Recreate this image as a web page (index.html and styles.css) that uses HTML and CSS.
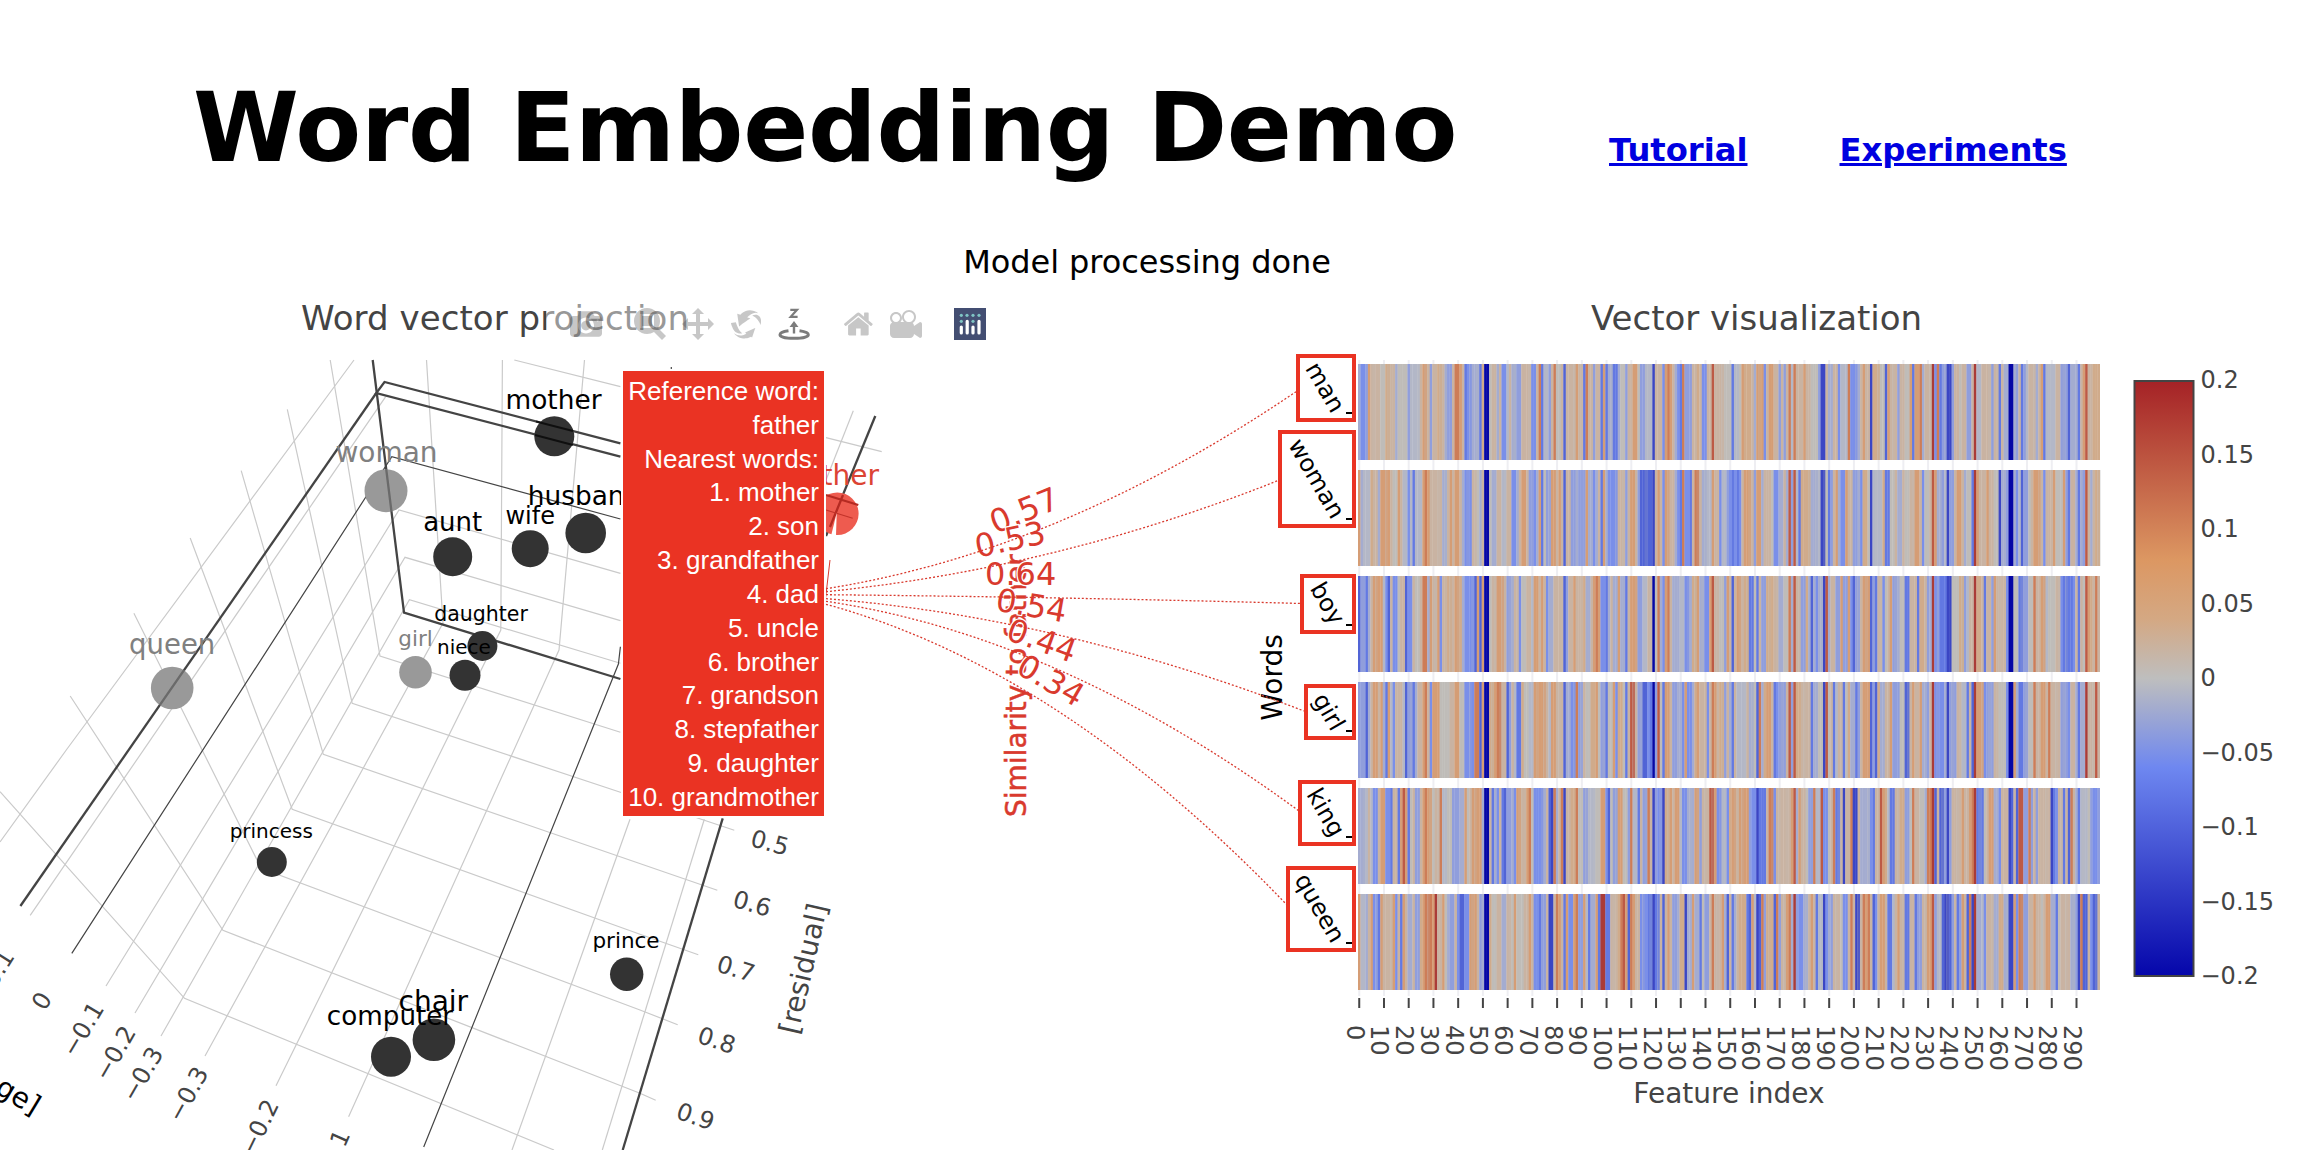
FILE: index.html
```html
<!DOCTYPE html>
<html lang="en">
<head>
<meta charset="utf-8">
<title>Word Embedding Demo</title>
<link rel="stylesheet" href="styles.css">
</head>
<body>
<header class="top">
  <h1 class="title">Word Embedding Demo</h1>
  <nav class="links"><a href="#tutorial">Tutorial</a><a href="#experiments">Experiments</a></nav>
</header>
<p class="status">Model processing done</p>
<main class="plots">
  <section class="scatter">
    <svg width="826" height="866" viewBox="0 284 826 866">
      <text class="plot-title" x="301" y="330" textLength="388">Word vector projection</text>
      <g class="grid">
        <path d="M354 360L67 749L0 842"/>
        <path d="M385.7 396.7L30.2 915.3"/>
        <path d="M620.4 573.3L399 510L106 986"/>
        <path d="M620.4 620.7L405 557.3L135 1013"/>
        <path d="M620.4 663.3L409.4 599.7L161 1036"/>
        <path d="M426.5 360L443 623L205 1056"/>
        <path d="M502.4 360L500.8 630L276 1085.7"/>
        <path d="M584.5 360L559 650L348.6 1116.7"/>
        <path d="M330.2 360L380 656L620.4 732.3"/>
        <path d="M287.3 409.3L352.2 703.3L620.4 792.3L734.3 830.3"/>
        <path d="M241.2 470.7L323.3 754.3L520 822.3L717.3 890.3"/>
        <path d="M190.2 538L292.2 809.3L640 934.3L698.3 954.7"/>
        <path d="M133.9 613.3L261.2 868.3L640 1010L677.7 1024.7"/>
        <path d="M70.2 696L222.9 930.3L640 1093.3L655.7 1100.3"/>
        <path d="M0 791.7L184.5 998.3L554 1150"/>
        <path d="M514.3 360L620.4 386.7"/>
        <path d="M826 437.7L881.7 451.7"/>
        <path d="M853.3 410.7L826 480"/>
        <path d="M630 819.3L571 985L512 1150"/>
        <path d="M704.3 819.3L602.3 1150"/>
      </g>
      <g class="zero">
        <path d="M620.4 519L391.8 456.7L71.8 953.3"/>
        <path d="M620.4 646.7L618.4 664L587.8 740L423.7 1147"/>
        <path d="M671.3 367v3"/>
      </g>
      <g class="axis">
        <path d="M372.7 360L404 612.7L620.4 679"/>
        <path d="M620.4 443.3L384.5 382L376.3 393L620.4 456.7"/>
        <path d="M376.3 393L20.4 906"/>
        <path d="M875.3 416L826 536"/>
        <path d="M722.7 818.3L622.7 1150"/>
      </g>
      <g class="words">
        <circle cx="554.3" cy="436.3" r="20"/><circle cx="585.7" cy="533" r="20.3"/>
        <circle cx="452.7" cy="556.7" r="19.5"/><circle cx="530.2" cy="548.7" r="18.5"/>
        <circle cx="482.4" cy="646" r="15"/><circle cx="465" cy="675.3" r="15.5"/>
        <circle cx="271.8" cy="862" r="15"/><circle cx="626.7" cy="974.3" r="16.7"/>
        <circle cx="433.9" cy="1039.7" r="21.3"/><circle cx="391" cy="1056.7" r="20"/>
      </g>
      <g class="words muted">
        <circle cx="386" cy="490.7" r="21.5"/><circle cx="415.5" cy="672.3" r="16.3"/><circle cx="172.2" cy="688" r="21.3"/>
      </g>
      <clipPath id="mutedDots"><circle cx="386" cy="490.7" r="21.5"/><circle cx="172.2" cy="688" r="21.3"/></clipPath>
      <g class="under muted-under"><path d="M372.7 360L404 612.7M376.3 393L20.4 906" clip-path="url(#mutedDots)"/></g>
      <g class="under"><path d="M536 421.5L573 431M535 435L573 445"/></g>
      <g class="word-labels">
        <text x="553.5" y="409" font-size="26.4">mother</text>
        <text x="584.5" y="505" font-size="26.4">husband</text>
        <text x="452.7" y="530.5" font-size="26">aunt</text>
        <text x="530.2" y="523.5" font-size="24">wife</text>
        <text x="481" y="621" font-size="20.5">daughter</text>
        <text x="464" y="654" font-size="20">niece</text>
        <text x="271.3" y="838" font-size="20">princess</text>
        <text x="626" y="948" font-size="21.5">prince</text>
        <text x="433.3" y="1010.7" font-size="28">chair</text>
        <text x="390" y="1024.5" font-size="26.2">computer</text>
        <g class="muted-text">
          <text x="386.5" y="461.5" font-size="28">woman</text>
          <text x="415.5" y="646" font-size="21.5">girl</text>
          <text x="172.2" y="653.5" font-size="27.5">queen</text>
        </g>
      </g>
      <g class="ticks3d">
        <text transform="translate(-2 968) rotate(-58)" dy=".36em">0.1</text>
        <text transform="translate(41.5 1000.7) rotate(-58)" dy=".36em">0</text>
        <text transform="translate(82.5 1029) rotate(-59)" dy=".36em">−0.1</text>
        <text transform="translate(114.5 1053) rotate(-60)" dy=".36em">−0.2</text>
        <text transform="translate(142 1074) rotate(-60)" dy=".36em">−0.3</text>
        <text transform="translate(187.5 1094) rotate(-61)" dy=".36em">−0.3</text>
        <text transform="translate(259 1127) rotate(-64)" dy=".36em">−0.2</text>
        <text transform="translate(339.6 1138) rotate(-66)" dy=".36em">1</text>
        <text transform="translate(770 842.3) rotate(15)" dy=".36em">0.5</text>
        <text transform="translate(752.3 903.3) rotate(16)" dy=".36em">0.6</text>
        <text transform="translate(736 968.3) rotate(17)" dy=".36em">0.7</text>
        <text transform="translate(716.7 1040) rotate(18)" dy=".36em">0.8</text>
        <text transform="translate(695.7 1116) rotate(19)" dy=".36em">0.9</text>
        <text class="name" transform="translate(805 969) rotate(-77)" dy=".28em">[residual]</text>
        <text class="name dark" transform="translate(33 1116) rotate(31)" text-anchor="end">[age]</text>
      </g>
      <g class="reference">
        <circle cx="837.3" cy="513.7" r="21.3"/>
        <path class="ref-axis" d="M826 495L858.3 505M843 495L830 527"/>
        <path class="ref-zero" d="M826 510L852.7 518.3"/>
        <path class="ref-gap" d="M836.7 513L831 536H836Z"/>
        <path class="ref-lead" d="M830 560L825 603"/>
        <text x="836.8" y="485" font-size="28">father</text>
      </g>
      <g class="modebar">
        <rect x="546" y="300" width="450" height="48"/>
        <g class="icon">
          <path transform="translate(570 308) scale(.032) matrix(1 0 0 -1 0 850)" d="m500 450c-83 0-150-67-150-150 0-83 67-150 150-150 83 0 150 67 150 150 0 83-67 150-150 150z m400 150h-120c-16 0-34 13-39 29l-31 93c-6 15-23 28-40 28h-340c-16 0-34-13-39-28l-31-94c-6-15-23-28-40-28h-120c-55 0-100-45-100-100v-450c0-55 45-100 100-100h800c55 0 100 45 100 100v450c0 55-45 100-100 100z m-400-550c-138 0-250 112-250 250 0 138 112 250 250 250 138 0 250-112 250-250 0-138-112-250-250-250z m365 380c-19 0-35 16-35 35 0 19 16 35 35 35 19 0 35-16 35-35 0-19-16-35-35-35z"/>
          <path transform="translate(634 308) scale(.032) matrix(1 0 0 -1 0 850)" d="m1000-25l-250 251c40 63 63 138 63 218 0 224-182 406-407 406-224 0-406-182-406-406s183-406 407-406c80 0 155 22 218 62l250-250 125 125z m-812 250l0 438 437 0 0-438-437 0z m62 375l313 0 0-312-313 0 0 312z"/>
          <path transform="translate(682 308) scale(.032) matrix(1 0 0 -1 0 850)" d="m1000 350l-187 188 0-125-250 0 0 250 125 0-188 187-187-187 125 0 0-250-250 0 0 125-188-188 186-187 0 125 252 0 0-250-125 0 187-188 188 188-125 0 0 250 250 0 0-126 187 188z"/>
          <path transform="translate(730 308) scale(.032) matrix(1 0 0 -1 0 850)" d="m922 660c-5 4-9 7-14 11-359 263-580-31-580-31l-102 28 58-400c0 1 1 1 2 2 118 108 351 249 351 249s-62 27-100 42c88 83 222 183 347 122 16-8 30-17 44-27-2 1-4 2-6 4z m36-329c0 0 64 229-88 296-62 27-124 14-175-11 157-78 225-208 249-266 8-19 11-31 11-31 2 5 6 15 11 32-5-13-8-20-8-20z m-775-239c70-31 117-50 198-32-121 80-199 346-199 346l-96-15-58-12c0 0 55-226 155-287z m603 133l-317-139c0 0 4-4 19-14 7-5 24-15 24-15s-177-147-389 4c235-287 536-112 536-112l31-22 100 299-4-1z"/>
          <path transform="translate(843.5 308) scale(.032) matrix(1 0 0 -1 0 850)" d="m786 296v-267q0-15-11-26t-25-10h-214v214h-143v-214h-214q-15 0-25 10t-11 26v267q0 1 0 2t0 2l321 264 321-264q1-1 1-4z m124 39l-34-41q-5-5-12-6h-2q-7 0-12 3l-386 322-386-322q-7-4-13-4-7 2-12 7l-35 41q-4 5-3 13t6 12l401 334q18 15 42 15t43-15l136-114v109q0 8 5 13t13 5h107q8 0 13-5t5-13v-227l122-102q5-5 6-12t-4-13z"/>
          <path transform="translate(890 308) scale(.032) matrix(1 0 0 -1 0 850)" d="m938 413l-188-125c0 37-17 71-44 94 64 38 107 107 107 187 0 121-98 219-219 219-121 0-219-98-219-219 0-61 25-117 66-156h-115c30 33 49 76 49 125 0 103-84 187-187 187s-188-84-188-187c0-57 26-107 65-141-38-22-65-62-65-109v-250c0-70 56-126 125-126h500c69 0 125 56 125 126l188-126c34 0 62 28 62 63v375c0 35-28 63-62 63z m-750 0c-69 0-125 56-125 125s56 125 125 125 125-56 125-125-56-125-125-125z m406-1c-87 0-157 70-157 157 0 86 70 156 157 156s156-70 156-156-70-157-156-157z"/>
        </g>
        <g class="icon-active">
          <path class="stroke" d="M790.3 309.8H797L790.7 316.8H797.6"/>
          <path class="fill" d="M794 321L798.5 327H795.2V333.5H792.8V327H789.5Z"/>
          <path class="stroke ring" d="M788.5 330.8C783 331.6 780 333 780 334.7C780 337 786 338.3 794 338.3S808.3 337 808.3 334.7C808.3 333 805 331.6 799.5 330.8"/>
        </g>
        <g class="logo">
          <path class="logo-bg" d="M954 308h32v32h-32z"/>
          <g class="logo-dots"><circle cx="961.3" cy="315.3" r="1.6"/><circle cx="967" cy="315.3" r="1.6"/><circle cx="973" cy="315.3" r="1.6"/><circle cx="979" cy="315.3" r="1.6"/><circle cx="961.3" cy="321.3" r="1.6"/><circle cx="973" cy="321.3" r="1.6"/></g>
          <path class="logo-bars" d="M961.3 327V333M967.2 321.3V333M973 327V333M979 321.3V333"/>
        </g>
      </g>
    </svg>
    <div class="tip">Reference word:<br>father<br>Nearest words:<br>1. mother<br>2. son<br>3. grandfather<br>4. dad<br>5. uncle<br>6. brother<br>7. grandson<br>8. stepfather<br>9. daughter<br>10. grandmother</div>
  </section>
  <section class="similarity">
    <svg width="440" height="866" viewBox="826 284 440 866">
      <text class="sim-title" transform="translate(1026 817) rotate(-90)">Similarity to father</text>
      <g class="sim-values">
        <text transform="translate(1024 510) rotate(-22)" dy=".36em">0.57</text>
        <text transform="translate(1010 539) rotate(-12)" dy=".36em">0.53</text>
        <text transform="translate(1020.7 573.5)" dy=".36em">0.64</text>
        <text transform="translate(1031.5 605) rotate(10)" dy=".36em">0.54</text>
        <text transform="translate(1042 640) rotate(20)" dy=".36em">0.44</text>
        <text transform="translate(1051 680) rotate(30)" dy=".36em">0.34</text>
      </g>
      <g class="sim-curves">
        <path d="M826 588.7Q1060 551.8 1296 391.7"/>
        <path d="M826 591.7Q1060 568 1282 479"/>
        <path d="M826 594.7Q1060 597 1302 603.5"/>
        <path d="M826 598.7Q1060 617 1304 711"/>
        <path d="M826 601.3Q1060 636 1299 811"/>
        <path d="M826 604.3Q1060 668 1287 905"/>
      </g>
    </svg>
  </section>
  <section class="heat">
    <svg width="1042" height="866" viewBox="1266 284 1042 866">
      <defs>
        <linearGradient id="scale" x1="0" y1="1" x2="0" y2="0">
          <stop offset="0" stop-color="#0506aa"/><stop offset=".35" stop-color="#6e87f0"/>
          <stop offset=".5" stop-color="#bebebe"/><stop offset=".6" stop-color="#d4a883"/>
          <stop offset=".7" stop-color="#dc9762"/><stop offset="1" stop-color="#a52226"/>
        </linearGradient>
      </defs>
      <text class="plot-title" x="1591" y="330" textLength="331">Vector visualization</text>
      <text class="axis-name dark" transform="translate(1281.7 677.5) rotate(-90)">Words</text>
      <g id="xaxis" class="xaxis"></g>
      <g id="cells"></g>
      <g id="boxes" class="boxes"></g>
      <text class="axis-name" x="1729" y="1102.5">Feature index</text>
      <rect class="bar" x="2134.5" y="381" width="59" height="595"/>
      <g id="barticks" class="barticks"></g>
    </svg>
  </section>
</main>
<script src="heat.js"></script>
</body>
</html>
```

FILE: styles.css
```css
body {
  margin: 0;
  width: 2308px;
  height: 1150px;
  overflow: hidden;
  background: #fff;
  font-family: "DejaVu Sans", Verdana, sans-serif;
}
.top {
  display: flex;
  align-items: baseline;
  height: 236px;
  padding: 72px 0 0 193px;
  box-sizing: border-box;
}
.title {
  margin: 0;
  width: 1416px;
  font-size: 96px;
  line-height: 112px;
  letter-spacing: -0.25px;
  white-space: nowrap;
}
.links { display: flex; gap: 92px; font-size: 32.2px; font-weight: bold; }
.links a { color: #0000e0; }
.status {
  margin: 0;
  height: 48px;
  padding: 0 36px 0 22px;
  font-size: 32px;
  line-height: 52px;
  letter-spacing: -0.05px;
  text-align: center;
}
.plots { display: grid; grid-template-columns: 826px 440px 1042px; height: 866px; }
.plots svg { display: block; overflow: visible; }
.scatter, .similarity { position: relative; }
.plot-title { font-size: 34px; fill: #444; }
.grid path { fill: none; stroke: #cacaca; stroke-width: 1.2; }
.zero path { fill: none; stroke: #444; stroke-width: 1.2; }
.axis path { fill: none; stroke: #444; stroke-width: 2.3; }
.words { fill: #333; }
.muted { fill: #999; }
.under path { fill: none; stroke: #000; stroke-opacity: .7; stroke-width: 2.3; }
.muted-under path { stroke: #555; }
.word-labels { text-anchor: middle; fill: #000; }
.muted-text { fill: #808080; }
.ticks3d { font-size: 24px; fill: #444; text-anchor: middle; }
.ticks3d .name { font-size: 28px; }
.ticks3d .dark { fill: #000; text-anchor: end; }
.reference { fill: #ee5b4f; text-anchor: middle; }
.reference text { fill: #dc4434; }
.reference path { fill: none; }
.reference .ref-axis { stroke: #b52a22; stroke-width: 2.3; }
.reference .ref-zero { stroke: #c2332a; stroke-width: 1.2; }
.reference .ref-gap { fill: #fff; }
.reference .ref-lead { stroke: #d93a2e; stroke-width: 1; }
.modebar rect { fill: #fff; fill-opacity: .45; }
.icon { fill: #444; fill-opacity: .3; }
.icon-active .fill { fill: #7c7c7c; }
.icon-active .stroke { fill: none; stroke: #7c7c7c; stroke-width: 2.2; }
.icon-active .ring { stroke-width: 3; }
.logo-bg { fill: #434e72; }
.logo-dots { fill: #7fc4c4; }
.logo-bars { stroke: #fff; stroke-width: 3.2; stroke-linecap: round; }
.tip {
  position: absolute;
  left: 621px;
  top: 85px;
  width: 205px;
  height: 449px;
  padding: 4px 5px 0 0;
  box-sizing: border-box;
  border: 2px solid #fff;
  background: #ea3323;
  color: #fff;
  font: 26px/33.83px "Liberation Sans", Arial, sans-serif;
  text-align: right;
  white-space: nowrap;
}
.similarity { z-index: 1; }
.sim-title { font-size: 28px; fill: #d93a2e; stroke: #d93a2e; stroke-width: .5px; }
.sim-values { font-size: 32px; fill: #d93a2e; text-anchor: middle; }
.sim-values text { paint-order: stroke; stroke: #fff; stroke-width: 2.5px; }
.sim-curves path { fill: none; stroke: #d93a2e; stroke-width: 1.3; stroke-dasharray: 2 2; }
.axis-name { font-size: 28px; fill: #444; text-anchor: middle; }
.axis-name.dark { fill: #000; }
.xaxis { font-size: 24px; fill: #444; }
.xaxis .line { stroke: #eeeef2; stroke-width: 2; }
.xaxis .tick { stroke: #444; stroke-width: 2; }
.boxes { font-size: 24px; text-anchor: end; }
.boxes rect { fill: none; stroke: #ea3323; stroke-width: 4; }
.boxes path { stroke: #000; stroke-width: 2; }
.bar { fill: url(#scale); stroke: #444; stroke-width: 2; }
.barticks { font-size: 24px; fill: #444; }
```

FILE: heat.js
```js
// Each row lists runs: the first feature index of a run and its level (A = -0.2 ... P = 0.2).
const rows = [
  "0G 1E 3F 4L 5J 9I 11K 13J 15G 16I 20F 21H 25J 26L 28J 29F 30J 32K 34J 35G 36F 38J 39M 41L 42J 43D 44E 46G 49D 50K 51A 53I 54J 56G 57J 58E 60H 61J 62G 64F 66J 70E 72J 73M 74D 75H 77F 78J 79M 80I 82J 83C 84J 88L 89J 91D 92M 93J 95F 96J 98D 99L 100D 101G 103D 105G 106I 108F 109J 111L 113I 114F 116H 119B 120J 123E 124L 125M 126L 127J 128G 129E 130D 131M 132F 135J 137K 138J 139E 141J 143N 144J 148I 151D 152H 154I 155L 156K 159J 160G 161L 164E 165J 166L 168J 170F 171J 172F 173J 174M 175H 176M 177J 180L 181J 183I 186F 187B 189J 190G 192J 194E 195H 198M 199E 202G 203J 204L 205J 207B 208K 211I 213C 214L 215J 218F 219J 221I 223L 224D 225L 227M 228G 229J 232O 233E 234M 235D 236F 238B 240F 241J 243I 244J 246F 248J 249O 250H 252J 256F 257J 259D 260J 261G 263A 265G 266F 267J 268D 269F 270H 271J 274G 275J 276L 277D 278H 282J 284F 287C 288G 291D 292J 293L 294N 295J 297K",
  "0L 1G 2H 5K 6J 8G 9L 13J 14I 16L 17J 18H 20E 21H 22D 23H 26L 27M 28L 29J 34G 36J 37L 38J 39L 41J 42G 43E 46J 48I 49G 50J 51A 53I 54G 56J 58H 60J 62E 64G 65J 66L 68J 69F 71E 72G 73L 74D 75I 76F 78L 80J 81L 82J 83C 84J 86F 88G 89F 92L 93G 95E 96G 97J 98D 99L 100G 101E 105J 108F 109J 110L 112J 113F 114C 119B 120J 121L 122J 123E 124L 126J 128G 129E 130D 131M 132E 134D 135J 136M 138J 139G 141H 143L 144J 146E 147H 149F 150E 151D 152E 153D 154E 155J 156L 159J 160F 161L 163G 164J 167I 168E 170G 172J 173G 174N 175F 176N 177H 178D 179K 183G 186H 187B 189I 190D 191F 192J 193L 194G 195E 197L 198J 200F 202G 203E 204K 206I 207B 208H 212K 213D 215I 217J 218G 220J 221I 223J 225L 227J 228E 229I 231J 232N 233L 234G 236F 237H 238B 239F 241J 242L 244J 245G 246I 248D 249O 250L 251J 254L 255J 257I 259B 260G 262F 263A 265G 266E 267H 268C 269F 271I 272J 273L 276J 277E 278J 281L 282I 285L 286F 287D 288J 290G 291D 292G 293F 294N 295J 296G 297J 298K",
  "0C 1F 3D 4G 5J 6L 10H 11E 12C 13J 14E 16I 17J 19C 20E 22J 23I 25J 26M 28G 29L 30J 32L 33E 34J 36K 38J 39L 41K 42G 43E 47C 48L 49C 50L 51A 53I 54J 56L 59J 60F 62G 63J 65E 66I 68J 70H 71L 73J 74L 75J 76E 77G 79J 83C 84F 85J 87L 88J 91K 92G 94J 95L 96M 97L 98E 100D 101G 102J 103G 105L 106G 108D 109J 110L 113F 115H 117J 119A 120I 121M 122G 123E 124L 125M 126J 127G 130H 132E 134G 135K 137L 138G 140E 142L 143N 144J 146I 148F 149L 150J 151C 153L 152J 155J 156K 158D 160I 161D 162J 163F 165K 168J 170G 172I 174M 175G 176N 177J 179F 181K 182G 183C 184G 185E 186G 188B 189N 190G 191J 193F 195L 196F 198L 199E 200C 201F 203J 204L 207C 208F 209D 210J 212E 213I 214J 215L 216F 218G 219I 221D 223J 226D 227K 229J 230F 231G 232O 233E 234F 235D 238B 240I 243K 245F 246H 247J 249O 250K 252J 253D 254J 256F 257L 258J 262E 263A 265I 267D 269F 271I 273M 274J 276L 278H 279I 282J 284E 285D 289E 290J 291D 292J 293I 294N 295L 296K 297J 298M 299J",
  "0F 3C 4G 5J 6L 8J 9L 10G 11D 12L 13H 14E 15J 18H 19C 20F 22D 23G 24J 26L 27M 28J 29E 30L 33I 37J 39L 41I 43E 47M 48M 49C 50L 51A 53K 55L 56M 58J 60C 61F 62J 63H 64D 66K 67I 69H 71L 76J 77H 78L 80J 83C 84G 86E 88M 89F 91J 92I 94K 96L 97I 98F 100D 101I 103L 104E 105K 107I 108D 109J 110N 112J 113F 115C 117E 118D 119A 120F 121N 122I 123D 124L 126J 127F 129G 131E 132L 133E 135G 136K 137L 138J 141E 142J 143M 144L 145J 146K 148F 149J 150G 151D 152J 153H 157J 158G 160I 161C 162M 163G 164K 165L 167J 168D 169E 170F 173J 174N 175F 176N 177K 179J 183D 184G 186I 188B 189N 190I 191J 192D 193H 194J 196D 197I 198K 199G 201D 202F 203J 204L 207C 208F 209C 210K 211G 213J 215L 216F 219I 221C 223J 224L 225J 227L 228G 230F 231J 232O 233E 237G 238B 239F 242J 244H 246D 247J 248C 249O 250L 253E 254F 257J 259I 262E 263A 265L 266G 267D 269F 271I 273M 274J 276L 278J 279M 280J 284F 287E 288J 290G 291D 292G 294O 295J 298N 299J",
  "0G 3H 4J 5H 6E 8J 9L 11E 13D 14J 16D 17L 18N 19L 20D 21I 22J 23F 25J 26L 27M 28L 30I 31J 33M 34H 36I 38F 41G 43L 44I 45J 46L 50G 51A 53J 54D 55G 56E 57J 58D 59C 60F 62G 63E 64L 66J 68L 69M 70I 71E 75G 76J 77C 78B 79M 80G 81J 82M 83B 84J 86K 88M 89I 91F 93H 96I 98L 100E 101C 102I 103F 105L 107I 109F 110M 111H 113D 114J 115F 117M 118J 119B 120F 121E 123B 124K 126L 127J 128L 130H 131E 133G 136L 138F 139J 142N 144L 145E 147H 149E 150K 151L 153J 154L 158F 159E 161B 162D 164D 165J 166M 168E 169J 175L 176N 177G 178L 179J 181I 182F 184M 185H 187N 188E 190I 191J 192M 193D 195J 196B 197J 199M 200B 202J 203G 207E 208D 209J 211N 212L 213K 214H 215D 217J 219K 221F 223I 224M 225J 227I 229G 230M 232O 233C 234J 235C 237F 238B 239F 240J 244L 245J 247L 248M 249O 250D 253I 254J 255L 257G 259E 260J 263B 264C 265J 266C 267N 269F 271M 272F 273J 274F 275J 280B 281D 282E 283J 285D 286J 287C 288M 289J 290G 291D 292H 295I 296F 297E 299F",
  "0L 1H 3G 4J 5L 6E 7F 8D 9L 10J 14L 15E 16J 17D 18L 19J 20G 22J 23F 25K 26L 27M 30L 31O 32J 34L 35I 36G 37F 39J 40E 41C 43E 45L 48J 49F 50G 51A 53K 54I 56J 58G 60J 62I 63L 64I 67J 69L 70J 71E 73D 74F 76J 77B 79J 80M 81L 82J 83D 84L 85E 87L 88M 89F 91L 92H 93D 94G 96L 97D 98O 100D 102J 105K 106M 107N 108L 109C 110M 111L 112J 114E 117D 119B 120D 122J 123C 124J 125L 126J 127F 129G 130K 132B 133G 135L 136G 138D 139I 140F 142J 143M 144J 147L 148G 149C 150J 151D 152G 153J 154K 157D 158C 159L 160H 161B 162C 163M 164F 165K 168C 169M 170F 171J 173L 174M 175G 176O 177F 178E 180G 182J 183L 184J 185D 186H 188B 189E 190G 191F 192J 195I 196E 198J 199M 200J 201B 203J 204M 205L 206M 207J 208C 209E 210J 211L 213J 214D 216H 217J 218L 219J 221D 223J 225D 226F 228J 230L 232N 233F 234H 236C 237B 239C 240F 241J 242D 243F 244L 245J 246C 247M 248B 249O 250G 252H 253E 254J 257G 259K 261G 263B 265L 266E 267M 269F 271J 273L 274J 276I 277J 278L 280G 282D 283I 284J 288G 290F 291B 292M 293C 295J 296E 297C 299J"
];

const levels = {
  A: "#0607a5", B: "#3b46c4", C: "#5164d6", D: "#6379e2", E: "#7a8fe9", F: "#909edc", G: "#a4acd0", H: "#b3b7c7",
  I: "#bfbcb8", J: "#c9b3a2", K: "#d0ab8b", L: "#d59d75", M: "#cd7d58", N: "#bd5a45", O: "#aa3c38", P: "#a52226"
};

const NS = "http://www.w3.org/2000/svg";
function add(parent, name, attrs, text) {
  const el = document.createElementNS(NS, name);
  for (const key in attrs) el.setAttribute(key, attrs[key]);
  if (text !== undefined) el.textContent = text;
  parent.appendChild(el);
}

const left = 1358, step = 742 / 300;

const xaxis = document.getElementById("xaxis");
for (let v = 0; v < 300; v += 10) {
  const x = left + (v + 0.5) * step;
  add(xaxis, "path", { class: "line", d: `M${x} 360V996` });
  add(xaxis, "path", { class: "tick", d: `M${x} 998V1008` });
  add(xaxis, "text", { transform: `translate(${x - 12.5} 1025) rotate(90)` }, v);
}

const cells = document.getElementById("cells");
rows.forEach((row, r) => {
  const runs = row.split(" ").map(s => [parseInt(s, 10), s.slice(-1)]).sort((a, b) => a[0] - b[0]);
  runs.forEach(([start, level], i) => {
    const end = i + 1 < runs.length ? runs[i + 1][0] : 300;
    for (let c = start; c < end; c++) {
      const shade = level !== "A" && c > start && (c * 7 + r) % 3 === 0 ? 0.82 : 1;
      const x = left + c * step;
      if (shade < 1) add(cells, "rect", { x, y: 364 + r * 106, width: step + 0.3, height: 96, fill: "#bebebe" });
      add(cells, "rect", { x, y: 364 + r * 106, width: c === 299 ? step : step + 0.3, height: 96, fill: levels[level], "fill-opacity": shade });
    }
  });
});

const boxes = document.getElementById("boxes");
[
  ["man", 1296, 354, 422], ["woman", 1278, 430, 528], ["boy", 1300, 574, 634],
  ["girl", 1304, 684, 740], ["king", 1298, 780, 846], ["queen", 1286, 866, 952]
].forEach(([word, x, top, bottom], i) => {
  const y = 413 + i * 106;
  add(boxes, "rect", { x: x + 2, y: top + 2, width: 1354 - x - 2, height: bottom - top - 4 });
  add(boxes, "path", { d: `M1346 ${y}H1352` });
  add(boxes, "text", { transform: `translate(1331.5 ${y + 1.5}) rotate(60)` }, word);
});

const ticks = document.getElementById("barticks");
["0.2", "0.15", "0.1", "0.05", "0", "−0.05", "−0.1", "−0.15", "−0.2"].forEach((label, i) => {
  add(ticks, "text", { x: 2200.5, y: 388 + i * 74.5 }, label);
});
```
